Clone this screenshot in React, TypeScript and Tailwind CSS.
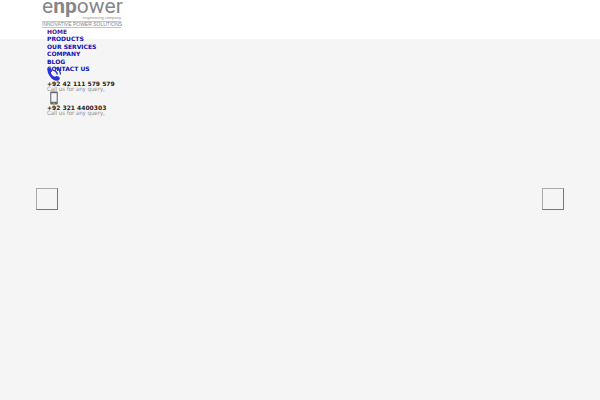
const links = ['HOME', 'PRODUCTS', 'OUR SERVICES', 'COMPANY', 'BLOG', 'CONTACT US']

function Logo() {
  return (
    <a href="#" aria-label="enpower" className="block w-[79px] pt-px font-['Liberation_Sans',sans-serif] text-[#85858a]">
      <span className="block h-[14px] font-['Roboto',sans-serif] text-[21px] leading-[10px]">
        e<b className="font-bold">np</b>ower
      </span>
      <span className="block text-right text-[4px] leading-[6px] text-[#909094]">engineering company</span>
      <span className="block whitespace-nowrap border-y border-[#c4c4c6] text-[5px] leading-[5px]">
        INNOVATIVE POWER SOLUTIONS
      </span>
    </a>
  )
}

function CallIcon() {
  return (
    <svg viewBox="0 0 26 26" className="block size-[14px]" fill="none" aria-hidden="true">
      <path
        d="M2 3C4 0 7 1 9 5c1 3 0 4-2 5 1 4 4 7 8 8 2-2 4-2 7 0 3 3 2 5-1 7-4 2-11-1-15-7C1 12 0 7 2 3Z"
        fill="#2635d8"
      />
      <path d="M14 7c3 1 5 3 5 7M14 1c6 1 11 6 11 13" stroke="#2635c9" strokeWidth="2.5" />
    </svg>
  )
}

function MobileIcon() {
  return (
    <svg viewBox="0 0 26 26" className="block size-[14px]" fill="none" aria-hidden="true">
      <rect x="6" y="1" width="14" height="24" rx="2" fill="#666" />
      <rect x="8" y="4" width="10" height="16" fill="#f5f5f5" />
      <circle cx="13" cy="22.500" r="1.200" fill="#ddd" />
    </svg>
  )
}

function Contact({ icon, phone }: { icon: React.ReactNode; phone: string }) {
  return (
    <div className="h-6">
      {icon}
      <p className="text-[6px] font-bold leading-[5px] text-[#222]">{phone}</p>
      <p className="font-['DejaVu_Sans_Condensed','DejaVu_Sans',sans-serif] text-[6px] leading-[5px] text-[#8c8c8c]">
        Call us for any query,
      </p>
    </div>
  )
}

export default function App() {
  return (
    <div className="min-h-screen bg-[#f5f5f5] font-['DejaVu_Sans',sans-serif]">
      <header className="h-[39px] bg-white px-[7%]">
        <Logo />
        <div className="pl-[5px]">
          <nav className="flex h-11 flex-col justify-between text-[6px] font-bold leading-[7px]">
            {links.map((link, i) => (
              <a key={link} href="#" className={i === 0 ? 'text-[#551a8b]' : 'text-[#0e0eb4]'}>
                {link}
              </a>
            ))}
          </nav>
          <div className="-mt-[5px]">
            <Contact icon={<CallIcon />} phone="+92 42 111 579 579" />
            <Contact icon={<MobileIcon />} phone="+92 321 4400303" />
          </div>
        </div>
      </header>
      <main className="flex justify-between px-[6%] pt-[149px]">
        <button aria-label="Previous" className="size-[22px] border border-[#aaa] border-r-[#777] border-b-[#777] bg-[#f5f5f5]" />
        <button aria-label="Next" className="size-[22px] border border-[#aaa] border-r-[#777] border-b-[#777] bg-[#f5f5f5]" />
      </main>
    </div>
  )
}
